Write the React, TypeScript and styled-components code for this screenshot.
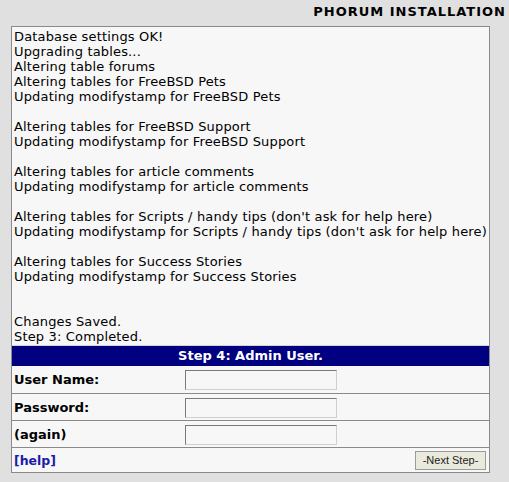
import React from 'react';
import styled, { createGlobalStyle } from 'styled-components';

const GlobalStyle = createGlobalStyle`
  body {
    margin: 0;
    background: #e0e0e0;
    font-family: "DejaVu Sans", Verdana, sans-serif;
    color: #000;
  }
`;

const Page = styled.div`
  width: 509px;
  height: 482px;
`;

const Title = styled.div`
  height: 26px;
  box-sizing: border-box;
  padding: 4px 3px 0 0;
  text-align: right;
  font-size: 13px;
  font-weight: bold;
  letter-spacing: 1px;
  line-height: 16px;
`;

const Panel = styled.div`
  margin-left: 11px;
  width: 477px;
  border: 1px solid #8a8a8a;
  background: #f7f7f7;
`;

const Log = styled.div`
  padding: 2px 2px 1px 2px;
  font-size: 13px;
  letter-spacing: 0.16px;
  line-height: 15px;
  white-space: pre-line;
`;

const Bar = styled.div`
  height: 20px;
  border-top: 1px solid #d4d4d4;
  background: #000080;
  color: #fff;
  font-size: 13px;
  font-weight: bold;
  line-height: 20px;
  text-align: center;
`;

const FormRow = styled.div<{ $first?: boolean }>`
  display: grid;
  grid-template-columns: 173px 1fr;
  align-items: center;
  height: ${(p) => (p.$first ? '27px' : '26px')};
  border-top: ${(p) => (p.$first ? 'none' : '1px solid #8a8a8a')};
`;

const Label = styled.label`
  padding-left: 2px;
  font-size: 13px;
  font-weight: bold;
`;

const TextInput = styled.input`
  box-sizing: border-box;
  width: 152px;
  height: 20px;
  margin: 1px 0 0 0;
  border: 1px solid;
  border-color: #7a7a7a #d0d0d0 #d0d0d0 #7a7a7a;
  background: #f7f7f7;
  padding: 0 2px;
`;

const Footer = styled.div`
  display: flex;
  justify-content: space-between;
  align-items: center;
  height: 24px;
  padding: 0 3px 0 2px;
  border-top: 1px solid #8a8a8a;
`;

const HelpLink = styled.a`
  color: #1b1ba8;
  font-size: 12.5px;
  font-weight: bold;
  text-decoration: none;
`;

const NextButton = styled.button`
  box-sizing: border-box;
  width: 71px;
  height: 19px;
  padding: 0;
  border: 1px solid #9a9a9a;
  background: #e9e9dc;
  font-family: "Liberation Sans", Arial, sans-serif;
  font-size: 11px;
  color: #222;
`;

const logText = `Database settings OK!
Upgrading tables...
Altering table forums
Altering tables for FreeBSD Pets
Updating modifystamp for FreeBSD Pets

Altering tables for FreeBSD Support
Updating modifystamp for FreeBSD Support

Altering tables for article comments
Updating modifystamp for article comments

Altering tables for Scripts / handy tips (don't ask for help here)
Updating modifystamp for Scripts / handy tips (don't ask for help here)

Altering tables for Success Stories
Updating modifystamp for Success Stories


Changes Saved.
Step 3: Completed.`;

const fields = [
  { label: 'User Name:', type: 'text' },
  { label: 'Password:', type: 'password' },
  { label: '(again)', type: 'password' },
];

export default function App() {
  return (
    <Page>
      <GlobalStyle />
      <Title>PHORUM INSTALLATION</Title>
      <Panel>
        <Log>{logText}</Log>
        <Bar>Step 4: Admin User.</Bar>
        {fields.map((f, i) => (
          <FormRow key={f.label} $first={i === 0}>
            <Label>{f.label}</Label>
            <div>
              <TextInput type={f.type} />
            </div>
          </FormRow>
        ))}
        <Footer>
          <HelpLink href="#">[help]</HelpLink>
          <NextButton>-Next Step-</NextButton>
        </Footer>
      </Panel>
    </Page>
  );
}
